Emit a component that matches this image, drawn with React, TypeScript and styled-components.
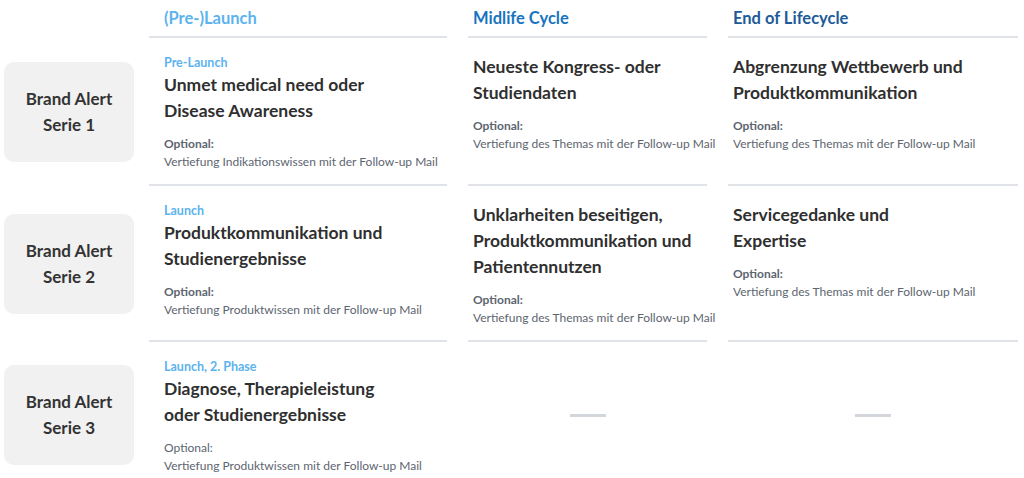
import React from "react";
import styled, { createGlobalStyle } from "styled-components";

const Global = createGlobalStyle`
  html, body { margin: 0; padding: 0; background: #ffffff; }
  body { font-family: Lato, "Noto Sans", sans-serif; -webkit-font-smoothing: antialiased; }
`;

const Grid = styled.div`
  display: grid;
  grid-template-columns: 124px 298px 239px 290px;
  column-gap: 21px;
  padding-left: 4px;
  width: 1024px;
  box-sizing: border-box;
`;

const Corner = styled.div``;

const HeadCell = styled.div<{ $color: string; $pad: number }>`
  height: 38px;
  box-sizing: border-box;
  border-bottom: 2px solid #e0e4e8;
  padding: 0 ${(p) => p.$pad}px;
  display: flex;
  align-items: center;
  font-size: 16.5px;
  font-weight: 700;
  color: ${(p) => p.$color};
`;

const LabelCell = styled.div`
  display: flex;
  align-items: center;
  margin-right: -6px;
`;

const LabelBox = styled.div`
  width: 130px;
  height: 100px;
  border-radius: 10px;
  background: #f1f1f1;
  display: flex;
  align-items: center;
  justify-content: center;
  text-align: center;
  font-size: 17px;
  font-weight: 700;
  line-height: 26px;
  color: #333333;
`;

const Cell = styled.div<{ $pad: number; $last?: boolean }>`
  box-sizing: border-box;
  padding: 16px ${(p) => p.$pad}px 13px;
  border-bottom: ${(p) => (p.$last ? "none" : "2px solid #e0e4e8")};
  min-height: ${(p) => (p.$last ? "146px" : "0")};
  display: flex;
  flex-direction: column;
`;

const Phase = styled.div`
  font-size: 12.5px;
  font-weight: 700;
  line-height: 18px;
  color: #5cb3ee;
`;

const Title = styled.div`
  font-size: 17.5px;
  font-weight: 700;
  line-height: 26px;
  color: #2f2f2f;
  margin-bottom: 11px;
`;

const OptLabel = styled.div<{ $bold: boolean }>`
  font-size: 12px;
  font-weight: ${(p) => (p.$bold ? 700 : 400)};
  line-height: 18px;
  color: #5d6570;
`;

const Desc = styled.div`
  font-size: 12px;
  line-height: 18px;
  color: #5d6570;
  white-space: nowrap;
`;

const EmptyCell = styled.div`
  min-height: 146px;
  display: flex;
  align-items: center;
  justify-content: center;
`;

const Dash = styled.div`
  width: 36px;
  height: 3px;
  background: #d3d7dc;
`;

type CellData = {
  phase?: string;
  title: string[];
  optBold?: boolean;
  desc: string;
} | null;

const headers = [
  { text: "(Pre-)Launch", color: "#5cb3ee", pad: 15 },
  { text: "Midlife Cycle", color: "#1874c0", pad: 5 },
  { text: "End of Lifecycle", color: "#1d5b98", pad: 5 },
];

const rows: { label: string; cells: CellData[] }[] = [
  {
    label: "Serie 1",
    cells: [
      {
        phase: "Pre-Launch",
        title: ["Unmet medical need oder", "Disease Awareness"],
        optBold: true,
        desc: "Vertiefung Indikationswissen mit der Follow-up Mail",
      },
      {
        title: ["Neueste Kongress- oder", "Studiendaten"],
        optBold: true,
        desc: "Vertiefung des Themas mit der Follow-up Mail",
      },
      {
        title: ["Abgrenzung Wettbewerb und", "Produktkommunikation"],
        optBold: true,
        desc: "Vertiefung des Themas mit der Follow-up Mail",
      },
    ],
  },
  {
    label: "Serie 2",
    cells: [
      {
        phase: "Launch",
        title: ["Produktkommunikation und", "Studienergebnisse"],
        optBold: true,
        desc: "Vertiefung Produktwissen mit der Follow-up Mail",
      },
      {
        title: ["Unklarheiten beseitigen,", "Produktkommunikation und", "Patientennutzen"],
        optBold: true,
        desc: "Vertiefung des Themas mit der Follow-up Mail",
      },
      {
        title: ["Servicegedanke und", "Expertise"],
        optBold: true,
        desc: "Vertiefung des Themas mit der Follow-up Mail",
      },
    ],
  },
  {
    label: "Serie 3",
    cells: [
      {
        phase: "Launch, 2. Phase",
        title: ["Diagnose, Therapieleistung", "oder Studienergebnisse"],
        optBold: false,
        desc: "Vertiefung Produktwissen mit der Follow-up Mail",
      },
      null,
      null,
    ],
  },
];

export default function App() {
  return (
    <>
      <Global />
      <Grid>
        <Corner />
        {headers.map((h) => (
          <HeadCell key={h.text} $color={h.color} $pad={h.pad}>
            {h.text}
          </HeadCell>
        ))}
        {rows.map((r, ri) => (
          <React.Fragment key={r.label}>
            <LabelCell>
              <LabelBox>
                Brand Alert
                <br />
                {r.label}
              </LabelBox>
            </LabelCell>
            {r.cells.map((c, ci) =>
              c ? (
                <Cell key={ci} $pad={headers[ci].pad} $last={ri === rows.length - 1}>
                  {c.phase && <Phase>{c.phase}</Phase>}
                  <Title>
                    {c.title.map((t, i) => (
                      <div key={i}>{t}</div>
                    ))}
                  </Title>
                  <OptLabel $bold={!!c.optBold}>Optional:</OptLabel>
                  <Desc>{c.desc}</Desc>
                </Cell>
              ) : (
                <EmptyCell key={ci}>
                  <Dash />
                </EmptyCell>
              )
            )}
          </React.Fragment>
        ))}
      </Grid>
    </>
  );
}
